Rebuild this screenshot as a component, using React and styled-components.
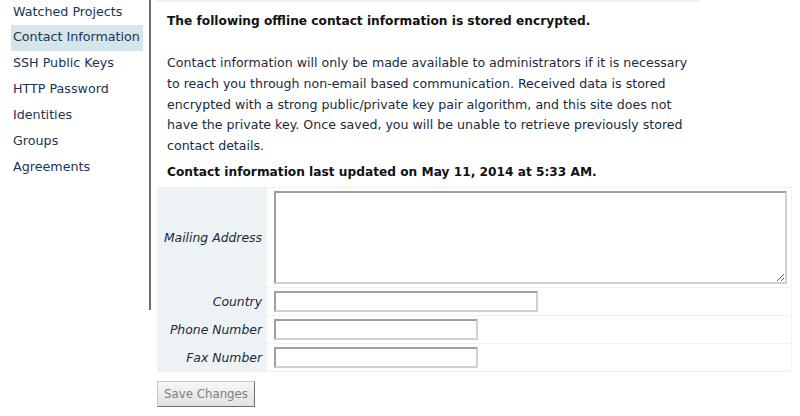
import styled, { createGlobalStyle } from "styled-components";

const GlobalStyle = createGlobalStyle`
  html, body {
    margin: 0;
    padding: 0;
    background: #fff;
  }
  body {
    font-family: "DejaVu Sans", Verdana, sans-serif;
    font-size: 12px;
    color: #1c2a3a;
  }
`;

const menuItems = [
  "Watched Projects",
  "Contact Information",
  "SSH Public Keys",
  "HTTP Password",
  "Identities",
  "Groups",
  "Agreements",
];

const fields = [
  { label: "Country", width: 264 },
  { label: "Phone Number", width: 204 },
  { label: "Fax Number", width: 204 },
];

const App = () => {
  return (
    <>
      <GlobalStyle />
      <Page>
        <Sidebar>
          {menuItems.map((item) => (
            <MenuItem key={item} active={item === "Contact Information"}>
              {item}
            </MenuItem>
          ))}
        </Sidebar>
        <Divider />
        <Main>
          <TopStrip />
          <Heading>The following offline contact information is stored encrypted.</Heading>
          <Paragraph>
            Contact information will only be made available to administrators if it is necessary
            <br />
            to reach you through non-email based communication. Received data is stored
            <br />
            encrypted with a strong public/private key pair algorithm, and this site does not
            <br />
            have the private key. Once saved, you will be unable to retrieve previously stored
            <br />
            contact details.
          </Paragraph>
          <Updated>Contact information last updated on May 11, 2014 at 5:33 AM.</Updated>
          <FormTable>
            <tbody>
              <Row>
                <Label>Mailing Address</Label>
                <Cell>
                  <Address />
                </Cell>
              </Row>
              {fields.map((f) => (
                <Row key={f.label}>
                  <Label>{f.label}</Label>
                  <Cell>
                    <TextInput style={{ width: f.width }} />
                  </Cell>
                </Row>
              ))}
            </tbody>
          </FormTable>
          <SaveButton disabled>Save Changes</SaveButton>
        </Main>
      </Page>
    </>
  );
};

export default App;

const Page = styled.div`
  display: flex;
  width: 800px;
  height: 416px;
  overflow: hidden;
`;

const Sidebar = styled.ul`
  list-style: none;
  margin: 0;
  padding: 1px 0 0 11px;
  width: 132px;
  flex-shrink: 0;
`;

const MenuItem = styled.li`
  height: 26px;
  line-height: 24px;
  padding-left: 2px;
  font-size: 12.7px;
  color: #1c3550;
  background: ${(p) => (p.active ? "#d5e5ea" : "transparent")};
  white-space: nowrap;
  &:first-child {
    height: 24px;
    line-height: 21px;
  }
`;

const Divider = styled.div`
  width: 2px;
  height: 310px;
  margin-left: 6px;
  background: #6b6b6b;
  flex-shrink: 0;
`;

const Main = styled.div`
  margin-left: 6px;
  width: 636px;
  display: flex;
  flex-direction: column;
  align-items: flex-start;
`;

const TopStrip = styled.div`
  width: 543px;
  height: 2px;
  background: #eef2f4;
`;

const Heading = styled.h3`
  margin: 10px 0 0 10px;
  font-size: 12.2px;
  font-weight: bold;
  line-height: 18px;
  color: #111;
`;

const Paragraph = styled.p`
  margin: 23px 0 0 10px;
  font-size: 12.6px;
  line-height: 20.8px;
  white-space: nowrap;
  color: #1c2a3a;
`;

const Updated = styled.div`
  margin: 6px 0 0 10px;
  font-size: 12.2px;
  font-weight: bold;
  line-height: 18px;
  color: #111;
`;

const FormTable = styled.table`
  margin-top: 6px;
  width: 635px;
  border-collapse: collapse;
  table-layout: fixed;
`;

const Row = styled.tr`
  border-top: 1px solid #eef2f3;
  border-bottom: 1px solid #eef2f3;
`;

const Label = styled.th`
  width: 110px;
  padding: 0 5px 0 0;
  box-sizing: border-box;
  background: #edf2f4;
  text-align: right;
  font-weight: normal;
  font-style: italic;
  font-size: 12.4px;
  color: #1c2a3a;
  white-space: nowrap;
`;

const Cell = styled.td`
  padding: 3px 4px 3px 7px;
  border-right: 1px solid #eef2f3;
`;

const Address = styled.textarea`
  display: block;
  width: 513px;
  height: 93px;
  box-sizing: border-box;
  border: 2px solid;
  border-color: #a0a0a0 #d0d0d0 #d0d0d0 #a0a0a0;
  margin: 0;
`;

const TextInput = styled.input`
  display: block;
  height: 21px;
  box-sizing: border-box;
  border: 2px solid;
  border-color: #a0a0a0 #d0d0d0 #d0d0d0 #a0a0a0;
  margin: 0;
`;

const SaveButton = styled.button`
  margin-top: 9px;
  height: 26px;
  width: 98px;
  padding: 0;
  font-family: "DejaVu Sans", Verdana, sans-serif;
  font-size: 11.8px;
  color: #808080;
  background: linear-gradient(#f6f6f6, #e2e2e2);
  border: 1px solid;
  border-color: #c8c8c8 #6e6e6e #6e6e6e #c8c8c8;
`;
